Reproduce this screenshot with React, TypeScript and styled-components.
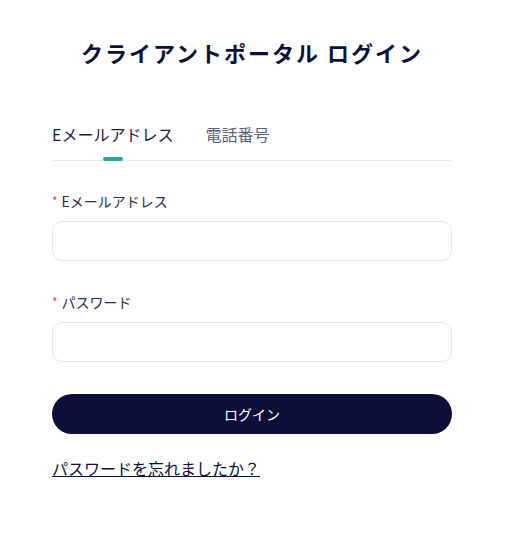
import React, { useState } from "react";
import styled, { createGlobalStyle } from "styled-components";

const GlobalStyle = createGlobalStyle`
  html, body {
    margin: 0;
    padding: 0;
    background: #ffffff;
    font-family: "Noto Sans CJK JP", "Noto Sans", sans-serif;
  }
`;

const Page = styled.div`
  width: 506px;
  height: 544px;
  box-sizing: border-box;
  padding: 34px 54px 0 52px;
  display: flex;
  flex-direction: column;
`;

const Title = styled.h1`
  margin: 0;
  text-align: center;
  font-size: 22px;
  font-weight: 700;
  letter-spacing: 2px;
  line-height: 36px;
  color: #0c0f3a;
`;

const Tabs = styled.div`
  margin-top: 52px;
  display: flex;
  gap: 32px;
  border-bottom: 1px solid #e8eaf2;
`;

const Tab = styled.button<{ $active?: boolean }>`
  position: relative;
  border: none;
  background: none;
  padding: 0 0 14px;
  font-family: inherit;
  font-size: 16px;
  line-height: 24px;
  color: ${(p) => (p.$active ? "#1a1d3d" : "#5a6080")};
  cursor: pointer;

  &::after {
    content: "";
    display: ${(p) => (p.$active ? "block" : "none")};
    position: absolute;
    left: 50%;
    bottom: -1px;
    width: 20px;
    height: 4px;
    margin-left: -10px;
    border-radius: 2px;
    background: #22a99d;
  }
`;

const Field = styled.div<{ $gap?: number }>`
  margin-top: ${(p) => p.$gap ?? 0}px;
  display: flex;
  flex-direction: column;
  gap: 10px;
`;

const Label = styled.label`
  font-size: 14px;
  line-height: 20px;
  color: #2a2d45;
  display: flex;
  align-items: center;
  gap: 4px;
`;

const Required = styled.span`
  color: #e5484d;
  font-size: 12px;
`;

const Input = styled.input`
  box-sizing: border-box;
  width: 100%;
  height: 40px;
  border: 1px solid #e3e6ef;
  border-radius: 10px;
  padding: 0 14px;
  font-family: inherit;
  font-size: 14px;
  outline: none;
`;

const SubmitButton = styled.button`
  margin-top: 32px;
  height: 40px;
  border: none;
  border-radius: 20px;
  background: #0c0f3a;
  color: #ffffff;
  font-family: inherit;
  font-size: 14px;
  cursor: pointer;
`;

const ForgotLink = styled.a`
  margin-top: 22px;
  align-self: flex-start;
  font-size: 16px;
  line-height: 24px;
  color: #0c0f3a;
  text-decoration: underline;
  cursor: pointer;
`;

export default function App() {
  const [tab, setTab] = useState<"email" | "phone">("email");
  return (
    <>
      <GlobalStyle />
      <Page>
        <Title>クライアントポータル ログイン</Title>
        <Tabs>
          <Tab $active={tab === "email"} onClick={() => setTab("email")}>
            Eメールアドレス
          </Tab>
          <Tab $active={tab === "phone"} onClick={() => setTab("phone")}>
            電話番号
          </Tab>
        </Tabs>
        <Field $gap={30}>
          <Label>
            <Required>*</Required>Eメールアドレス
          </Label>
          <Input type="email" />
        </Field>
        <Field $gap={31}>
          <Label>
            <Required>*</Required>パスワード
          </Label>
          <Input type="password" />
        </Field>
        <SubmitButton>ログイン</SubmitButton>
        <ForgotLink>パスワードを忘れましたか？</ForgotLink>
      </Page>
    </>
  );
}
